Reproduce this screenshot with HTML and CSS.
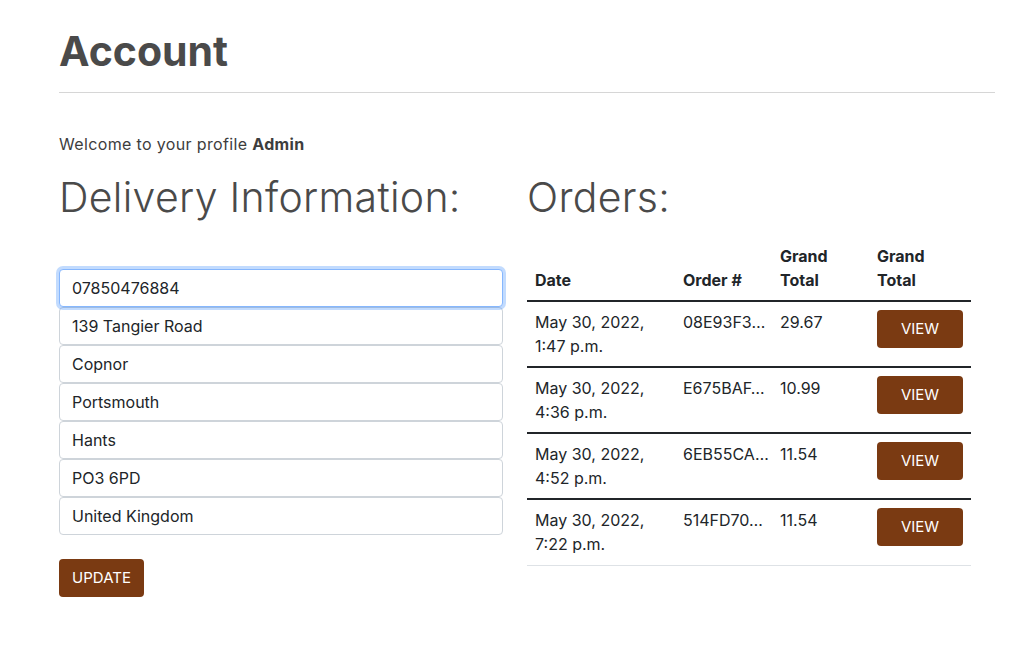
FILE: index.html
```html
<!DOCTYPE html>
<html lang="en">
<head>
<meta charset="utf-8">
<title>Account</title>
<link rel="stylesheet" href="styles.css">
</head>
<body>
<main class="container">
  <h1 class="page-title">Account</h1>
  <hr class="divider">
  <p class="welcome">Welcome to your profile <strong>Admin</strong></p>
  <div class="row">
    <section class="col">
      <h2 class="section-title">Delivery Information:</h2>
      <form class="delivery-form">
        <input class="form-control is-focused" type="text" value="07850476884">
        <input class="form-control" type="text" value="139 Tangier Road">
        <input class="form-control" type="text" value="Copnor">
        <input class="form-control" type="text" value="Portsmouth">
        <input class="form-control" type="text" value="Hants">
        <input class="form-control" type="text" value="PO3 6PD">
        <input class="form-control" type="text" value="United Kingdom">
        <button class="btn btn-brown btn-update" type="button">UPDATE</button>
      </form>
    </section>
    <section class="col">
      <h2 class="section-title">Orders:</h2>
      <table class="orders">
        <colgroup>
          <col class="c-date"><col class="c-num"><col class="c-total"><col class="c-action">
        </colgroup>
        <thead>
          <tr><th>Date</th><th>Order #</th><th>Grand Total</th><th>Grand Total</th></tr>
        </thead>
        <tbody>
          <tr><td>May 30, 2022, 1:47 p.m.</td><td class="trunc">08E93F3…</td><td>29.67</td><td><button class="btn btn-brown btn-view" type="button">VIEW</button></td></tr>
          <tr><td>May 30, 2022, 4:36 p.m.</td><td class="trunc">E675BAF…</td><td>10.99</td><td><button class="btn btn-brown btn-view" type="button">VIEW</button></td></tr>
          <tr><td>May 30, 2022, 4:52 p.m.</td><td class="trunc">6EB55CA…</td><td>11.54</td><td><button class="btn btn-brown btn-view" type="button">VIEW</button></td></tr>
          <tr class="last"><td>May 30, 2022, 7:22 p.m.</td><td class="trunc">514FD70…</td><td>11.54</td><td><button class="btn btn-brown btn-view" type="button">VIEW</button></td></tr>
        </tbody>
      </table>
    </section>
  </div>
</main>
</body>
</html>
```

FILE: styles.css
```css
* { box-sizing: border-box; }

html, body {
  margin: 0;
  background: #fff;
}

body {
  font-family: Inter, "Noto Sans", sans-serif;
  color: #212529;
  font-size: 16px;
  line-height: 1.5;
}

.container {
  width: 936px;
  margin-left: 59px;
  padding-top: 27px;
}

.page-title {
  margin: 0;
  font-size: 41px;
  line-height: 48px;
  font-weight: 700;
  color: #4a4a4a;
}

.divider {
  margin: 17px 0 0;
  border: 0;
  border-top: 1px solid #d6d6d6;
  height: 0;
}

.welcome {
  margin: 40px 0 0;
  font-size: 16px;
  line-height: 22px;
  letter-spacing: 0.35px;
  color: #3d3d3d;
}

.welcome strong {
  font-weight: 700;
  color: #3d3d3d;
}

.row {
  display: flex;
  gap: 24px;
  margin-top: 18px;
}

.col {
  width: 444px;
}

.section-title {
  margin: 0;
  font-size: 41px;
  line-height: 48px;
  font-weight: 300;
  letter-spacing: 0.3px;
  color: #4a4a4a;
}

.delivery-form {
  margin-top: 48px;
  display: flex;
  flex-direction: column;
  align-items: flex-start;
}

.form-control {
  display: block;
  width: 100%;
  height: 38px;
  padding: 6px 12px;
  font-family: inherit;
  font-size: 16px;
  line-height: 24px;
  color: #212529;
  background: #fff;
  border: 1px solid #ced4da;
  border-radius: 4px;
  outline: none;
}

.form-control.is-focused {
  border-color: #86b7fe;
  box-shadow: 0 0 0 3px rgba(13, 110, 253, 0.25);
  position: relative;
}

.btn {
  font-family: inherit;
  border: 0;
  border-radius: 4px;
  color: #fff;
  font-size: 15px;
  line-height: 24px;
  height: 38px;
  padding: 7px 0;
  text-align: center;
  cursor: pointer;
}

.btn-brown {
  background: #7a3a12;
}

.btn-update {
  width: 85px;
  margin-top: 24px;
}

.btn-view {
  width: 86px;
  display: block;
}

.orders {
  margin-top: 15px;
  width: 444px;
  table-layout: fixed;
  border-collapse: collapse;
}

.c-date { width: 148px; }
.c-num { width: 97px; }
.c-total { width: 97px; }
.c-action { width: 102px; }

.orders th,
.orders td {
  padding: 8px;
  text-align: left;
  font-size: 16px;
  line-height: 24px;
}

.orders th {
  vertical-align: bottom;
  font-weight: 700;
  color: #212529;
  border-bottom: 2px solid #212529;
}

.orders td {
  vertical-align: top;
  color: #212529;
  height: 66px;
  border-bottom: 2px solid #212529;
}

.orders tr.last td {
  border-bottom: 1px solid #dee2e6;
}

.orders td.trunc {
  white-space: nowrap;
}
```
